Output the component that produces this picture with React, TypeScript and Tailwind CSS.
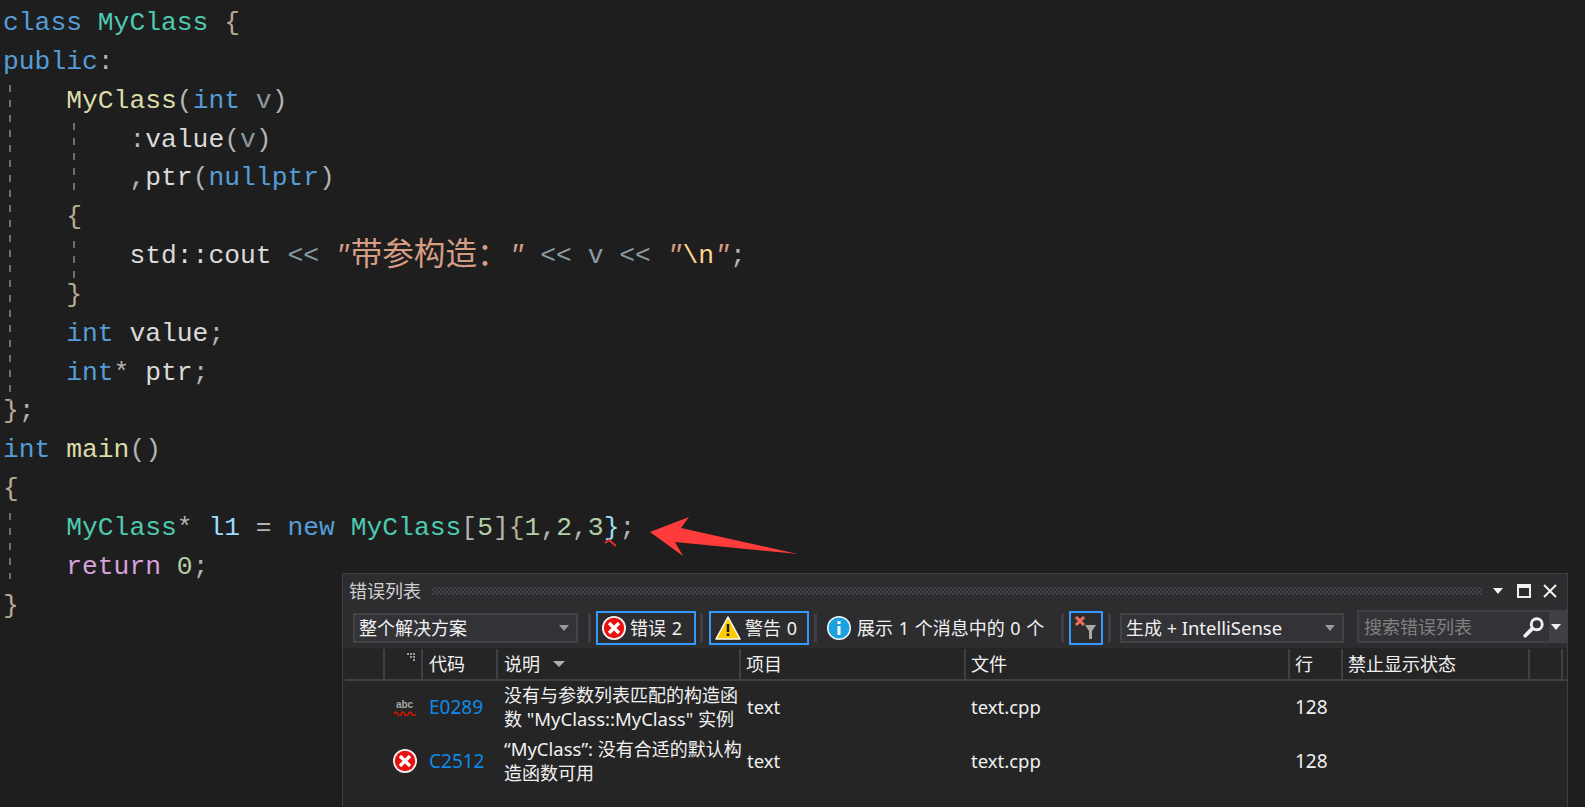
// VS editor with the error list tool window floating on top
type Token = [string, string];

const KW = 'text-[#569cd6]';
const TYPE = 'text-[#4ec9b0]';
const FN = 'text-[#dcdcaa]';
const PUNC = 'text-[#b4b4b4]';
const PLAIN = 'text-[#dadada]';
const GRAY = 'text-[#8a9aa3]';
const BRACE = 'text-[#b8ad94]';
const STR = 'italic text-[#d69d85]';
const ESC = 'text-[#ffd68f]';
const NUM = 'text-[#b5cea8]';
const RET = 'text-[#d8a0df]';
const VAR = 'text-[#9cdcfe]';

const codeLines: Token[][] = [
  [['class', KW], [' ', PLAIN], ['MyClass', TYPE], [' ', PLAIN], ['{', BRACE]],
  [['public', KW], [':', PUNC]],
  [['    ', PLAIN], ['MyClass', FN], ['(', PUNC], ['int', KW], [' ', PLAIN], ['v', GRAY], [')', PUNC]],
  [['        ', PLAIN], [':', PUNC], ['value', PLAIN], ['(', PUNC], ['v', GRAY], [')', PUNC]],
  [['        ', PLAIN], [',', PUNC], ['ptr', PLAIN], ['(', PUNC], ['nullptr', KW], [')', PUNC]],
  [['    ', PLAIN], ['{', BRACE]],
  [['        ', PLAIN], ['std::cout', PLAIN], [' ', PLAIN], ['<<', GRAY], [' ', PLAIN], ['"', STR], ['带参构造：', 'cjk'], ['"', STR], [' ', PLAIN], ['<<', GRAY], [' ', PLAIN], ['v', GRAY], [' ', PLAIN], ['<<', GRAY], [' ', PLAIN], ['"', STR], ['\\n', ESC], ['"', STR], [';', PUNC]],
  [['    ', PLAIN], ['}', BRACE]],
  [['    ', PLAIN], ['int', KW], [' ', PLAIN], ['value', PLAIN], [';', PUNC]],
  [['    ', PLAIN], ['int', KW], ['*', PUNC], [' ', PLAIN], ['ptr', PLAIN], [';', PUNC]],
  [['}', BRACE], [';', PUNC]],
  [['int', KW], [' ', PLAIN], ['main', FN], ['()', PUNC]],
  [['{', BRACE]],
  [['    ', PLAIN], ['MyClass', TYPE], ['*', PUNC], [' ', PLAIN], ['l1', VAR], [' ', PLAIN], ['=', PUNC], [' ', PLAIN], ['new', KW], [' ', PLAIN], ['MyClass', TYPE], ['[', PUNC], ['5', NUM], [']', PUNC], ['{', BRACE], ['1', NUM], [',', PUNC], ['2', NUM], [',', PUNC], ['3', NUM], ['}', VAR], [';', PUNC]],
  [['    ', PLAIN], ['return', RET], [' ', PLAIN], ['0', NUM], [';', PUNC]],
  [['}', BRACE]],
];

const guides = [
  'left-[9px] top-[85px] h-[316px]',
  'left-[73px] top-[123px] h-[70px]',
  'left-[73px] top-[241px] h-[37px]',
  'left-[9px] top-[513px] h-[66px]',
];

function ErrorIcon() {
  return (
    <svg width="24" height="24" viewBox="0 0 24 24" className="shrink-0">
      <circle cx="12" cy="12" r="12" fill="#f4f4f4" />
      <circle cx="12" cy="12" r="10.2" fill="#e81010" />
      <path d="M7 7l10 10M17 7L7 17" stroke="#fff" strokeWidth="3.4" />
    </svg>
  );
}

function WarningIcon() {
  return (
    <svg width="26" height="24" viewBox="0 0 26 24" className="shrink-0">
      <path d="M13 1L25 23H1Z" fill="#ffcc00" stroke="#fff" strokeWidth="1.5" strokeLinejoin="round" />
      <path d="M13 8v8M13 17.5v2.5" stroke="#1e1e1e" strokeWidth="2.6" />
    </svg>
  );
}

function InfoIcon() {
  return (
    <svg width="24" height="24" viewBox="0 0 24 24" className="shrink-0">
      <circle cx="12" cy="12" r="12" fill="#f4f4f4" />
      <circle cx="12" cy="12" r="10.5" fill="#1ba1e2" />
      <path d="M12 10v9M12 5v3" stroke="#fff" strokeWidth="3" />
    </svg>
  );
}

function FilterIcon() {
  return (
    <svg width="24" height="26" viewBox="0 0 24 26">
      <path d="M2 2l8 8M10 2l-8 8" stroke="#f1705c" strokeWidth="3" />
      <path d="M11 10h11l-4 6v8h-3v-8Z" fill="#a8a8a8" />
    </svg>
  );
}

function Caret({ className, width = 10 }: { className: string; width?: number }) {
  return (
    <svg width={width} height="6" viewBox="0 0 10 6" preserveAspectRatio="none" className={className}>
      <path d="M0 0h10L5 6Z" fill="currentColor" />
    </svg>
  );
}

function Separator({ className }: { className: string }) {
  return <div className={`h-[28px] w-[3px] shrink-0 bg-[#3f3f46] ${className}`} />;
}

function Combo({ label, className }: { label: React.ReactNode; className: string }) {
  return (
    <div className={`flex h-[30px] shrink-0 items-center justify-between border-2 border-[#434346] bg-[#333337] pl-[4px] pr-[7px] text-[#f1f1f1] ${className}`}>
      <span>{label}</span>
      <Caret className="text-[#999999]" />
    </div>
  );
}

function ToggleButton({ icon, label, className }: { icon: React.ReactNode; label: string; className: string }) {
  return (
    <div className={`flex h-[34px] w-[100px] shrink-0 items-center gap-[4px] border-2 border-[#3399ff] pl-[4px] text-[#f1f1f1] ${className}`}>
      {icon}
      <span className="[word-spacing:1px]">{label}</span>
    </div>
  );
}

const COLS = 'grid grid-cols-[38px_38px_75px_243px_225px_324px_53px_187px_35px]';

function HeaderCell({ children, className = '' }: { children?: React.ReactNode; className?: string }) {
  return (
    <div className={`flex h-[30px] items-center border-l-2 border-[#3f3f46] pl-[5px] text-[#f1f1f1] ${className}`}>
      {children}
    </div>
  );
}

function ErrorRow({ icon, code, lines }: { icon: React.ReactNode; code: string; lines: React.ReactNode[] }) {
  return (
    <div className={`${COLS} h-[54px] items-center text-[#f1f1f1]`}>
      <div />
      <div className="flex justify-center pl-[5px]">{icon}</div>
      <div className="pl-[8px] text-[19px] text-[#0e8ae6]">{code}</div>
      <div className="pl-[8px] leading-[24px]">
        {lines.map((line, i) => (
          <div key={i} className="whitespace-nowrap">{line}</div>
        ))}
      </div>
      <div className="pl-[8px] text-[18.5px]">text</div>
      <div className="pl-[7px] text-[18.5px]">text.cpp</div>
      <div className="pl-[7px] text-[19px]">128</div>
      <div />
      <div />
    </div>
  );
}

export default function App() {
  return (
    <div className="relative h-[807px] w-[1585px] overflow-hidden bg-[#1e1e1e]">
      {/* Editor */}
      <div className="whitespace-pre pl-[3px] pt-[4px] font-['Liberation_Mono','Noto_Sans_CJK_SC',monospace] text-[26.33px] leading-[38.85px]">
        {codeLines.map((tokens, i) => (
          <div key={i} className="h-[38.85px]">
            {tokens.map(([text, color], j) =>
              color === 'cjk' ? (
                <span key={j} className="align-[-2px] text-[31.6px] leading-[30px] text-[#d69d85]">{text}</span>
              ) : (
                <span key={j} className={color}>{text}</span>
              ),
            )}
          </div>
        ))}
      </div>

      {guides.map((g) => (
        <div
          key={g}
          className={`absolute w-[2px] bg-[repeating-linear-gradient(to_bottom,#6e6e6e_0,#6e6e6e_7px,transparent_7px,transparent_15px)] ${g}`}
        />
      ))}

      {/* Squiggle and red annotation arrow */}
      <svg className="absolute left-[600px] top-[510px]" width="210" height="60" viewBox="600 510 210 60">
        <path d="M605 543l4-3 7 6" fill="none" stroke="#e5302b" strokeWidth="2" />
        <path d="M650 532L689 517L681 528L798 554L675 542L683 556Z" fill="#ff3b3b" />
      </svg>

      {/* Error list tool window */}
      <div className="absolute bottom-0 left-[342px] top-[573px] flex w-[1226px] flex-col border-l border-r border-t border-[#3f3f46] bg-[#2d2d30] font-['Noto_Sans','Noto_Sans_CJK_SC',sans-serif] text-[18px] leading-[24px]">
        {/* Title bar */}
        <div className="flex h-[34px] shrink-0 items-center pl-[6px] pr-[10px]">
          <span className="text-[#d0d0d0]">错误列表</span>
          <div className="ml-[11px] h-[8px] flex-1 bg-[conic-gradient(#434347_25%,transparent_0_50%,#434347_0_75%,transparent_0)] bg-[length:4px_4px]" />
          <Caret className="ml-[10px] text-[#f1f1f1]" />
          <div className="ml-[14px] h-[14px] w-[14px] border-2 border-t-4 border-[#f1f1f1]" />
          <svg width="14" height="14" viewBox="0 0 14 14" className="ml-[12px]">
            <path d="M1 1l12 12M13 1L1 13" stroke="#f1f1f1" strokeWidth="2" />
          </svg>
        </div>

        {/* Toolbar */}
        <div className="flex h-[40px] shrink-0 items-center pl-[10px]">
          <Combo label="整个解决方案" className="w-[225px]" />
          <Separator className="ml-[10px]" />
          <ToggleButton icon={<ErrorIcon />} label="错误 2" className="ml-[5px]" />
          <Separator className="ml-[4px]" />
          <ToggleButton icon={<WarningIcon />} label="警告 0" className="ml-[6px]" />
          <Separator className="ml-[5px]" />
          <div className="ml-[10px] flex w-[234px] shrink-0 items-center gap-[6px] text-[#f1f1f1]">
            <InfoIcon />
            <span className="whitespace-nowrap [word-spacing:1px]">展示 1 个消息中的 0 个</span>
          </div>
          <Separator className="" />
          <div className="ml-[5px] flex h-[34px] w-[34px] shrink-0 items-center justify-center border-2 border-[#3399ff]">
            <FilterIcon />
          </div>
          <Separator className="ml-[5px]" />
          <Combo
            label={<>生成 + <span className="text-[18.5px]">IntelliSense</span></>}
            className="ml-[9px] w-[224px]"
          />
          <div className="-mt-[3px] ml-[13px] flex h-[33px] flex-1 items-center justify-between bg-[#3f3f46] p-[2px] pr-[6px]">
            <div className="flex h-full w-[190px] items-center justify-between bg-[#333337] pl-[5px] pr-[4px] text-[#808080]">
              <span>搜索错误列表</span>
              <svg width="22" height="22" viewBox="0 0 20 20">
                <circle cx="12.5" cy="7.5" r="5" fill="none" stroke="#f1f1f1" strokeWidth="2.6" />
                <path d="M8.5 11.5L2 18" stroke="#f1f1f1" strokeWidth="3.4" strokeLinecap="round" />
              </svg>
            </div>
            <Caret className="text-[#f1f1f1]" />
          </div>
        </div>

        {/* Table */}
        <div className="flex-1 bg-[#252526] pl-[2px]">
          <div className={`${COLS} h-[33px] items-end border-b-2 border-[#3f3f46]`}>
            <div />
            <HeaderCell className="relative">
              <svg width="10" height="10" viewBox="0 0 10 10" className="absolute right-[4px] top-[4px]">
                <path d="M0 0h2v2H0ZM3 0h2v2H3ZM6 0h2v2H6ZM3 3h2v2H3ZM6 3h2v2H6ZM6 6h2v2H6Z" fill="#9a9a9a" />
              </svg>
            </HeaderCell>
            <HeaderCell className="pl-[6px]">代码</HeaderCell>
            <HeaderCell className="pl-[6px]">
              说明
              <Caret width={12} className="ml-[13px] text-[#b0b0b0]" />
            </HeaderCell>
            <HeaderCell>项目</HeaderCell>
            <HeaderCell>文件</HeaderCell>
            <HeaderCell>行</HeaderCell>
            <HeaderCell>禁止显示状态</HeaderCell>
            <HeaderCell className="border-r-2" />
          </div>
          <div className="-mt-px">
            <ErrorRow
              icon={
                <div className="flex w-[24px] flex-col items-center">
                  <span className="font-['Liberation_Sans',sans-serif] text-[10px] font-bold leading-[11px] text-[#a8a8a8]">abc</span>
                  <svg width="22" height="6" viewBox="0 0 22 6">
                    <path d="M0 4q2-4 3.6 0t3.6 0 3.6 0 3.6 0 3.6 0 3.6 0" fill="none" stroke="#e51400" strokeWidth="1.6" />
                  </svg>
                </div>
              }
              code="E0289"
              lines={[
                '没有与参数列表匹配的构造函',
                <>数 <span className="text-[18.5px]">"MyClass::MyClass"</span> 实例</>,
              ]}
            />
            <ErrorRow
              icon={<ErrorIcon />}
              code="C2512"
              lines={[
                <><span className="text-[18.5px]">“MyClass”:</span> 没有合适的默认构</>,
                '造函数可用',
              ]}
            />
          </div>
        </div>
      </div>
    </div>
  );
}
